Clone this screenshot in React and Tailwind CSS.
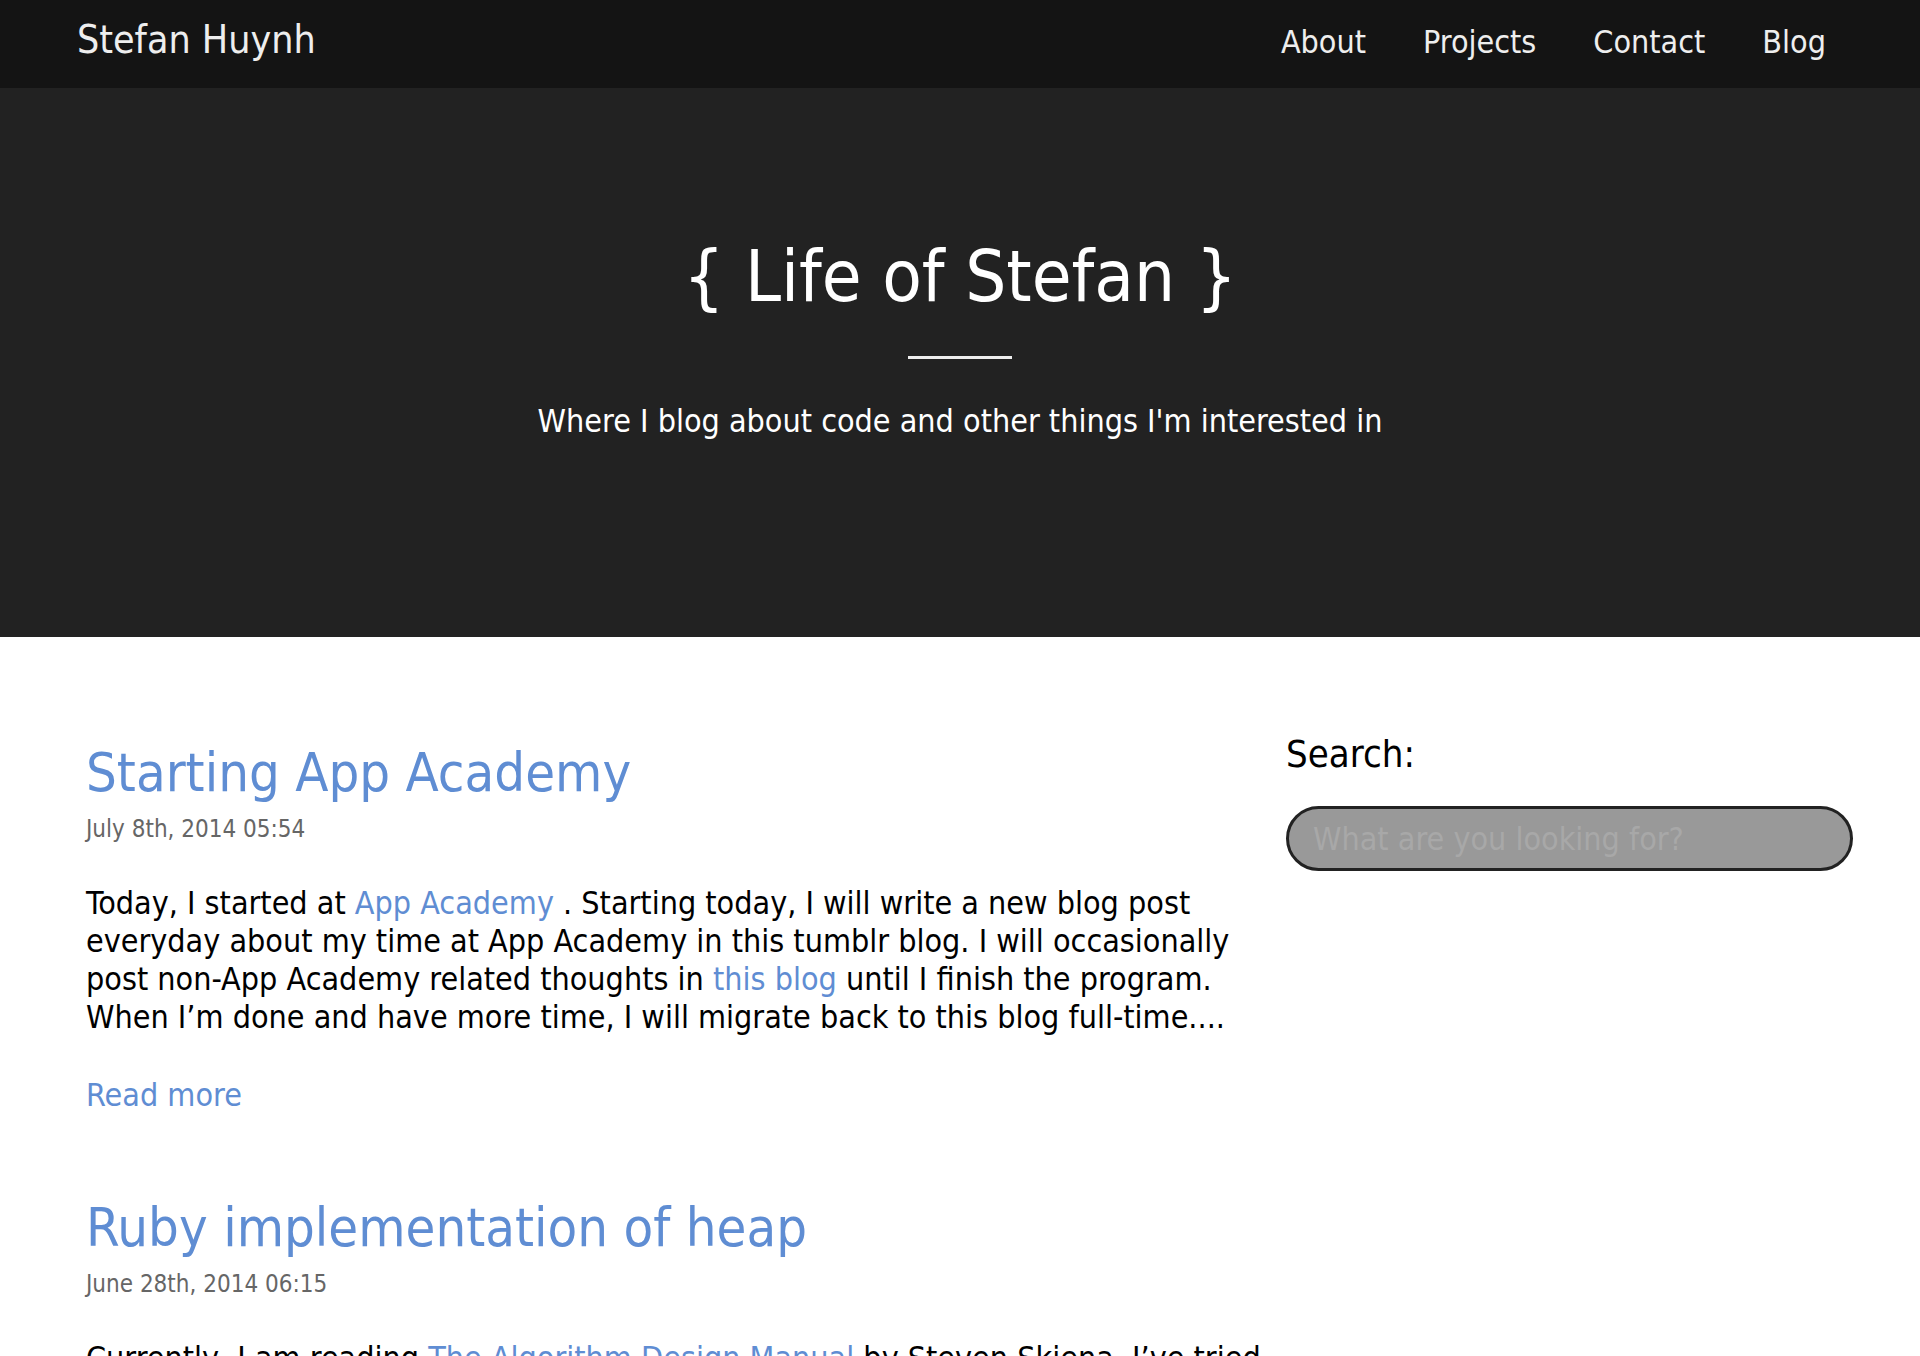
import React from 'react';

const font = { fontFamily: '"DejaVu Sans Condensed", "DejaVu Sans", sans-serif', fontStretch: 'condensed' };

const posts = [
  {
    title: 'Starting App Academy',
    date: 'July 8th, 2014 05:54',
    body: (
      <>
        Today, I started at <a href="#" className="text-[#5f8dd3]">App Academy</a> . Starting today, I will write a new blog post
        everyday about my time at App Academy in this tumblr blog. I will occasionally post non-App Academy related thoughts in{' '}
        <a href="#" className="text-[#5f8dd3]">this blog</a> until I finish the program. When I’m done and have more time, I will
        migrate back to this blog full-time....
      </>
    ),
  },
  {
    title: 'Ruby implementation of heap',
    date: 'June 28th, 2014 06:15',
    body: (
      <>
        Currently, I am reading <a href="#" className="text-[#5f8dd3]">The Algorithm Design Manual</a> by Steven Skiena. I’ve tried
        implementing a few of the data structures in Ruby while reading through the chapters. Here is my heap....
      </>
    ),
  },
];

export default function App() {
  return (
    <div className="min-h-screen bg-white text-black" style={font}>
      {/* barra de navegação */}
      <header className="bg-[#141414] h-[88px] flex items-center justify-between pl-[77px] pr-[94px]">
        <a href="#" className="text-[#eeeeee] text-[39px] leading-none -mt-[10px]">Stefan Huynh</a>
        <nav>
          <ul className="flex gap-[57px] text-[32px] text-[#eeeeee] leading-none -mt-[4px]">
            <li><a href="#">About</a></li>
            <li><a href="#">Projects</a></li>
            <li><a href="#">Contact</a></li>
            <li><a href="#">Blog</a></li>
          </ul>
        </nav>
      </header>

      {/* topo */}
      <section className="bg-[#222222] h-[549px] flex flex-col items-center pt-[152px] text-white">
        <h1 className="text-[72px] leading-none">{'{ Life of Stefan }'}</h1>
        <hr className="w-[104px] border-0 border-t-[3px] border-[#eeeeee] mt-[44px] mb-0" />
        <p className="text-[32px] leading-none mt-[46px]">Where I blog about code and other things I'm interested in</p>
      </section>

      <main className="flex pl-[86px] pr-[67px] pt-[98px]">
        <div className="w-[1185px] pt-[11px]">
          {posts.map((p) => (
            <article key={p.title} className="mb-[90px]">
              <h2 className="text-[54px] leading-none text-[#5f8dd3]">
                <a href="#">{p.title}</a>
              </h2>
              <div className="text-[24px] text-[#666666] mt-[17px] leading-none">{p.date}</div>
              <p className="text-[32px] leading-[38px] mt-[43px]">{p.body}</p>
              <a href="#" className="block text-[32px] text-[#5f8dd3] mt-[43px] leading-none">Read more</a>
            </article>
          ))}
        </div>
        <aside className="ml-[15px] flex-1">
          <h3 className="text-[38px] leading-none">Search:</h3>
          <input
            type="text"
            placeholder="What are you looking for?"
            className="mt-[33px] w-full h-[65px] rounded-full border-[3px] border-[#222222] bg-[#999999] px-[24px] text-[32px] placeholder:text-[#a8a8a8] outline-none"
            style={font}
          />
        </aside>
      </main>
    </div>
  );
}
